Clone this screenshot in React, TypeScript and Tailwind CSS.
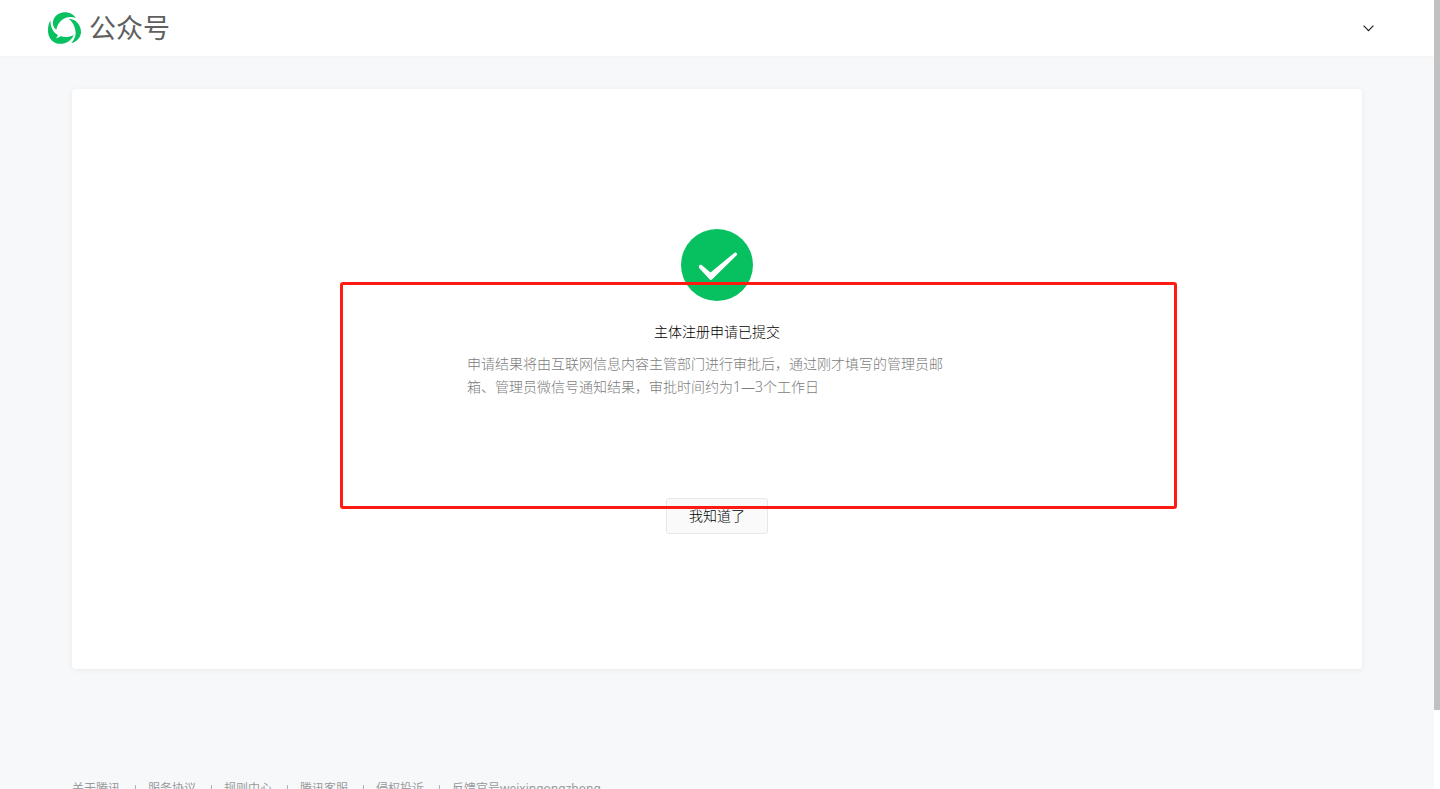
const links = ['关于腾讯', '服务协议', '规则中心', '腾讯客服', '侵权投诉', '反馈官号weixingongzhong'];

function Logo() {
  return (
    <svg className="h-8 w-[33px]" viewBox="0 0 100 96" fill="#07c160" aria-hidden="true">
      <path d="M15 37 C13 15 30 0 51 0 C66 0 78 7 85 18 C68 11 53 15 43 23 C33 31 28 40 25 53 C19 49 16 43 15 37 Z" />
      <path d="M7 25 C8 47 16 61 30 69 L25 80 L39 73 C51 77 65 76 78 69 C71 86 55 96 38 96 C16 96 0 79 0 56 C0 44 2 33 7 25 Z" />
      <path d="M63 20 C86 21 100 40 100 60 C100 75 89 89 71 94 C81 82 86 69 83 55 C81 41 74 30 63 20 Z" />
    </svg>
  );
}

function Header() {
  return (
    <header className="flex h-14 shrink-0 items-center justify-between bg-white pl-12 pr-[60px] shadow-[0_2px_0_#f5f5f5]">
      <a href="#" className="flex items-center gap-2 text-[27px] leading-8 text-[#606060]">
        <Logo />
        公众号
      </a>
      <button type="button" aria-label="账号菜单" className="h-4">
        <svg className="w-[11px]" viewBox="0 0 11 7" fill="none" stroke="#222" strokeWidth="1.2">
          <path d="M0.6 0.6 L5.5 5.6 L10.4 0.6" />
        </svg>
      </button>
    </header>
  );
}

export default function App() {
  return (
    <div className="flex h-screen bg-white font-['Noto_Sans','Noto_Sans_CJK_SC',sans-serif]">
      <div className="flex min-w-0 flex-1 flex-col overflow-hidden bg-[#f6f8fa]">
        <Header />

        <main className="shrink-0 px-[72px] pt-[33px]">
          <section className="relative flex flex-col items-center rounded-sm bg-white px-6 pt-[140px] pb-[135px] text-sm font-light shadow-[0_1px_6px_rgba(0,0,0,0.06)]">
            <svg className="size-[72px]" viewBox="0 0 72 72" aria-hidden="true">
              <circle cx="36" cy="36" r="36" fill="#07c160" />
              <path
                d="M20.3 35.8 L29.5 43.4 L53.3 23.9 C55 22.8 57 24.7 55.7 26.3 L31.2 50.2 C30.3 51.2 29.3 51.1 28.5 50.2 L18.6 39.6 C16.8 37.4 18.6 35 20.3 35.8 Z"
                fill="#fff"
              />
            </svg>
            <h1 className="mt-5 font-light leading-[22px] text-black">主体注册申请已提交</h1>
            <p className="mt-[9px] w-[500px] max-w-full leading-[23px] text-[#7c7c7c]">
              申请结果将由互联网信息内容主管部门进行审批后，通过刚才填写的管理员邮箱、管理员微信号通知结果，审批时间约为1—3个工作日
            </p>
            <button type="button" className="mt-[100px] h-9 w-[102px] rounded-[3px] border border-[#e4e8eb] bg-[#fafafa] text-black">
              我知道了
            </button>

            <div className="pointer-events-none absolute top-[193px] right-[185px] bottom-40 left-[268px] rounded-[3px] border-3 border-[#ff1a12]" />
          </section>
        </main>

        <footer className="mt-[110px] shrink-0 px-[72px] text-xs leading-5 text-[#9a9a9a]">
          <ul className="flex items-center">
            {links.map((link, i) => (
              <li key={link} className="flex items-center">
                {i > 0 && <span className="mt-0.5 mr-3 ml-[15px] h-2.5 w-px bg-[#b0b0b0]" />}
                <a href="#">{link}</a>
              </li>
            ))}
          </ul>
        </footer>
      </div>

      <div className="w-1.5 shrink-0">
        <div className="h-[90%] bg-[#c1c1c1]" />
      </div>
    </div>
  );
}
